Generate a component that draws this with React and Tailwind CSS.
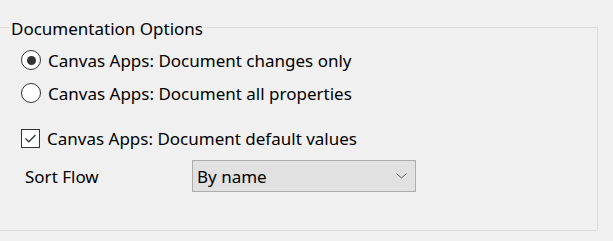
export default function App() {
  return (
    <div className="w-[613px] h-[241px] bg-[#f0f0f0] text-black font-['Noto_Sans',sans-serif] text-[17px] leading-none overflow-hidden">
      {/* Group box */}
      <div className="relative mt-[27px] ml-[-1px] w-[599px] h-[204px] border border-[#dcdcdc]">
        <div className="absolute left-[10px] top-[-11px] bg-[#f0f0f0] px-[1px] h-[22px] flex items-center">
          Documentation Options
        </div>

        <div className="pt-[21px] pl-[21px] flex flex-col">
          {/* Radios */}
          <label className="flex items-center h-[22px] gap-[7px]">
            <span className="w-[20px] h-[20px] rounded-full border border-[#333] bg-white flex items-center justify-center">
              <span className="w-[9px] h-[9px] rounded-full bg-[#333]" />
            </span>
            <span>Canvas Apps: Document changes only</span>
          </label>
          <label className="flex items-center h-[22px] gap-[7px] mt-[11px]">
            <span className="w-[20px] h-[20px] rounded-full border border-[#333] bg-white" />
            <span>Canvas Apps: Document all properties</span>
          </label>

          {/* Checkbox */}
          <label className="flex items-center h-[22px] gap-[7px] mt-[23px]">
            <span className="w-[19px] h-[19px] border border-[#333] bg-white flex items-center justify-center">
              <svg width="13" height="13" viewBox="0 0 13 13" fill="none">
                <path d="M1.5 6.5 L4.8 9.8 L11.5 3" stroke="#333" strokeWidth="1.3" />
              </svg>
            </span>
            <span>Canvas Apps: Document default values</span>
          </label>

          {/* Sort Flow */}
          <div className="flex items-center mt-[11px]">
            <span className="w-[171px] pl-[4px]">Sort Flow</span>
            <div className="w-[224px] h-[32px] border border-[#adadad] bg-[#e1e1e1] flex items-center justify-between pl-[4px] pr-[8px]">
              <span>By name</span>
              <svg width="11" height="6" viewBox="0 0 11 6" fill="none">
                <path d="M0.5 0.5 L5.5 5 L10.5 0.5" stroke="#606060" strokeWidth="1" />
              </svg>
            </div>
          </div>
        </div>
      </div>
    </div>
  );
}
